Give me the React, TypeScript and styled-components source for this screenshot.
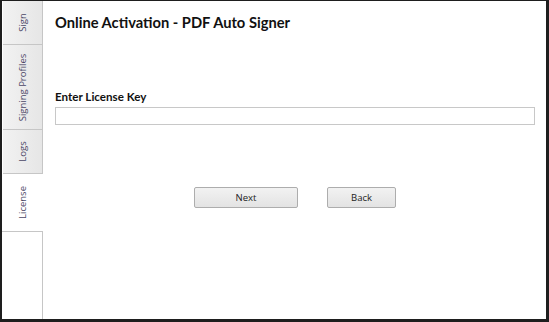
import React from "react";
import styled, { createGlobalStyle } from "styled-components";

const GlobalStyle = createGlobalStyle`
  html, body {
    margin: 0;
    padding: 0;
    background: #ffffff;
  }
  body {
    font-family: Lato, "Open Sans", sans-serif;
  }
`;

type TabInfo = { label: string; height: number; active?: boolean };

const tabs: TabInfo[] = [
  { label: "Sign", height: 44 },
  { label: "Signing Profiles", height: 85 },
  { label: "Logs", height: 44 },
  { label: "License", height: 57, active: true },
];

function App() {
  return (
    <>
      <GlobalStyle />
      <Window>
        <Sidebar>
          {tabs.map((t) => (
            <Tab key={t.label} $height={t.height} $active={t.active}>
              <TabLabel>{t.label}</TabLabel>
            </Tab>
          ))}
          <TabFiller />
        </Sidebar>
        <Content>
          <Title>Online Activation - PDF Auto Signer</Title>
          <FieldLabel>Enter License Key</FieldLabel>
          <KeyInput type="text" />
          <ButtonRow>
            <Button $width={104}>Next</Button>
            <Button $width={69}>Back</Button>
          </ButtonRow>
        </Content>
      </Window>
    </>
  );
}

const Window = styled.div`
  width: 549px;
  height: 322px;
  box-sizing: border-box;
  display: flex;
  border-left: 2px solid #1e1e1e;
  border-top: 1px solid #1e1e1e;
  border-right: 3px solid #1e1e1e;
  border-bottom: 3px solid #1e1e1e;
  background: #ffffff;
  overflow: hidden;
`;

const Sidebar = styled.div`
  width: 41px;
  display: flex;
  flex-direction: column;
  flex-shrink: 0;
`;

const Tab = styled.div<{ $height: number; $active?: boolean }>`
  height: ${(p) => p.$height}px;
  box-sizing: border-box;
  margin-left: ${(p) => (p.$active ? 0 : 1)}px;
  display: flex;
  align-items: center;
  justify-content: center;
  background: ${(p) =>
    p.$active ? "#ffffff" : "linear-gradient(to right, #f2f2f2, #e6e6e6)"};
  border-right: 1px solid ${(p) => (p.$active ? "transparent" : "#c6c6c6")};
  border-bottom: 1px solid ${(p) => (p.$active ? "transparent" : "#c6c6c6")};
`;

const TabLabel = styled.span`
  transform: rotate(-90deg);
  white-space: nowrap;
  font-family: "Open Sans", sans-serif;
  font-size: 9.5px;
  color: #4b4766;
`;

const TabFiller = styled.div`
  flex: 1;
  border-top: 1px solid #c6c6c6;
  border-right: 1px solid #c6c6c6;
  background: #ffffff;
`;

const Content = styled.div`
  flex: 1;
  display: flex;
  flex-direction: column;
  padding: 11px 11px 0 12px;
`;

const Title = styled.div`
  font-size: 14.7px;
  font-weight: 700;
  color: #111111;
  line-height: 20px;
`;

const FieldLabel = styled.div`
  margin-top: 57px;
  font-size: 11.6px;
  font-weight: 700;
  color: #111111;
  line-height: 16px;
`;

const KeyInput = styled.input`
  margin-top: 2px;
  height: 18px;
  box-sizing: border-box;
  border: 1px solid #c8c8c8;
  outline: none;
  padding: 0 3px;
  font-size: 11px;
`;

const ButtonRow = styled.div`
  margin-top: 62px;
  display: flex;
  justify-content: center;
  gap: 29px;
`;

const Button = styled.button<{ $width: number }>`
  width: ${(p) => p.$width}px;
  height: 21px;
  box-sizing: border-box;
  border: 1px solid #adadad;
  border-radius: 2px;
  background: linear-gradient(to bottom, #f2f2f2, #e3e3e3);
  font-family: "Open Sans", sans-serif;
  font-size: 9.5px;
  color: #222222;
  padding: 0;
`;

export default App;
